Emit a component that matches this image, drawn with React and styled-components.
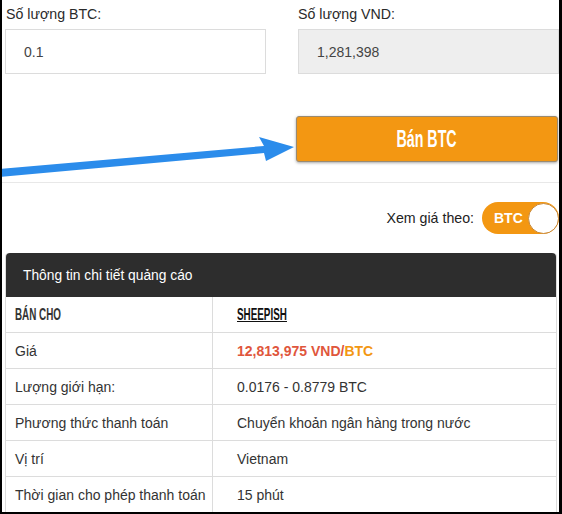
import React from "react";
import styled, { createGlobalStyle } from "styled-components";

const GlobalStyle = createGlobalStyle`
  html, body {
    margin: 0;
    padding: 0;
    background: #fff;
  }
  body {
    font-family: "Liberation Sans", Arial, sans-serif;
    color: #333;
  }
`;

const Frame = styled.div`
  position: relative;
  width: 562px;
  height: 514px;
  box-sizing: border-box;
  border-left: 2px solid #000;
  border-right: 3px solid #000;
  border-bottom: 2px solid #000;
  overflow: hidden;
`;

const FormGrid = styled.div`
  display: grid;
  grid-template-columns: 261px 261px;
  column-gap: 32px;
  padding-left: 3px;
  padding-top: 5px;
`;

const Field = styled.div`
  display: flex;
  flex-direction: column;
`;

const Label = styled.label`
  font-size: 14.2px;
  line-height: 18px;
  color: #2a2a2a;
  margin-bottom: 6px;
  padding-left: ${(p) => (p.$inset ? "1px" : "0")};
`;

const Input = styled.div`
  height: 45px;
  box-sizing: border-box;
  border: 1px solid #dcdcdc;
  background: ${(p) => (p.$readOnly ? "#eeeeee" : "#fff")};
  padding-left: 18px;
  display: flex;
  align-items: center;
  font-size: 14px;
  color: #444;
`;

const ActionRow = styled.div`
  display: flex;
  justify-content: flex-end;
  padding: 42px 1px 0 0;
  height: 46px;
`;

const SellButton = styled.button`
  width: 262px;
  height: 46px;
  border: 1px solid #9a8a70;
  border-radius: 3px;
  background: #f39712;
  box-shadow: 0 1px 3px rgba(0, 0, 0, 0.35);
  color: #fff;
  cursor: pointer;
  padding: 0;
`;

/* narrow display face imitation (no condensed font installed) */
const Narrow = styled.span`
  display: inline-block;
  font-family: "Liberation Sans", Arial, sans-serif;
  font-weight: ${(p) => (p.$bold ? "bold" : "normal")};
  font-size: ${(p) => p.$size}px;
  transform: scaleX(${(p) => p.$squeeze});
  transform-origin: ${(p) => (p.$left ? "left center" : "center")};
  text-decoration: ${(p) => (p.$underline ? "underline" : "none")};
  white-space: nowrap;
`;

const Divider = styled.hr`
  margin: 20px 0 0;
  border: 0;
  border-top: 1px solid #e8e8e8;
`;

const ViewRow = styled.div`
  display: flex;
  justify-content: flex-end;
  align-items: center;
  gap: 8px;
  margin-top: 19px;
  height: 32px;
`;

const ViewLabel = styled.span`
  font-size: 14.2px;
  color: #222;
`;

const Toggle = styled.div`
  width: 77px;
  height: 32px;
  border-radius: 16px;
  background: #f39712;
  display: flex;
  align-items: center;
  justify-content: space-between;
  padding: 0 0 0 12px;
  box-sizing: border-box;
`;

const ToggleText = styled.span`
  color: #fff;
  font-weight: bold;
  font-size: 14px;
`;

const Knob = styled.span`
  width: 31px;
  height: 31px;
  border-radius: 50%;
  background: #fff;
  border: 1px solid #c98a3a;
  box-sizing: border-box;
`;

const Table = styled.div`
  margin: 19px 2px 0 3px;
  border: 1px solid #dcdcdc;
  border-top: 0;
  border-radius: 4px 4px 0 0;
`;

const TableHead = styled.div`
  height: 44px;
  background: #2d2d2d;
  border-radius: 4px 4px 0 0;
  color: #fff;
  font-size: 13.8px;
  display: flex;
  align-items: center;
  padding-left: 17px;
`;

const Row = styled.div`
  display: grid;
  grid-template-columns: 206px 1fr;
  height: ${(p) => p.$h || 36}px;
  border-top: ${(p) => (p.$first ? "0" : "1px solid #dcdcdc")};
  box-sizing: border-box;
`;

const Cell = styled.div`
  display: flex;
  align-items: center;
  padding-left: ${(p) => (p.$right ? "24px" : "9px")};
  border-left: ${(p) => (p.$right ? "1px solid #dcdcdc" : "0")};
  font-size: 14px;
  color: #333;
  overflow: hidden;
`;

const UserLink = styled.a`
  color: #111;
  display: inline-flex;
`;

const Price = styled.span`
  font-weight: bold;
  color: #e0563c;
`;

const Coin = styled.span`
  font-weight: bold;
  color: #f39712;
`;

const Arrow = () => (
  <svg
    width="300"
    height="190"
    viewBox="0 0 300 190"
    style={{ position: "absolute", left: -2, top: 0, pointerEvents: "none" }}
  >
    <polygon
      points="0,169 264,146 259,137 294,147 266,161 264,153 0,177"
      fill="#2b8ceb"
    />
  </svg>
);

const rows = [
  ["Lượng giới hạn:", "0.0176 - 0.8779 BTC"],
  ["Phương thức thanh toán", "Chuyển khoản ngân hàng trong nước"],
  ["Vị trí", "Vietnam"],
  ["Thời gian cho phép thanh toán", "15 phút"],
];

export default function App() {
  return (
    <>
      <GlobalStyle />
      <Frame>
        <FormGrid>
          <Field>
            <Label $inset>Số lượng BTC:</Label>
            <Input>0.1</Input>
          </Field>
          <Field>
            <Label>Số lượng VND:</Label>
            <Input $readOnly>1,281,398</Input>
          </Field>
        </FormGrid>

        <ActionRow>
          <SellButton>
            <Narrow $bold $size={23} $squeeze={0.62}>Bán BTC</Narrow>
          </SellButton>
        </ActionRow>

        <Divider />

        <ViewRow>
          <ViewLabel>Xem giá theo:</ViewLabel>
          <Toggle>
            <ToggleText>BTC</ToggleText>
            <Knob />
          </Toggle>
        </ViewRow>

        <Table>
          <TableHead>Thông tin chi tiết quảng cáo</TableHead>
          <Row $first $h={35}>
            <Cell>
              <Narrow $bold $size={17} $squeeze={0.58} $left>BÁN CHO</Narrow>
            </Cell>
            <Cell $right>
              <UserLink href="#">
                <Narrow $bold $underline $size={17} $squeeze={0.58} $left>SHEEPISH</Narrow>
              </UserLink>
            </Cell>
          </Row>
          <Row>
            <Cell>Giá</Cell>
            <Cell $right>
              <Price>12,813,975 VND/</Price>
              <Coin>BTC</Coin>
            </Cell>
          </Row>
          {rows.map(([k, v]) => (
            <Row key={k}>
              <Cell>{k}</Cell>
              <Cell $right>{v}</Cell>
            </Row>
          ))}
        </Table>

        <Arrow />
      </Frame>
    </>
  );
}
